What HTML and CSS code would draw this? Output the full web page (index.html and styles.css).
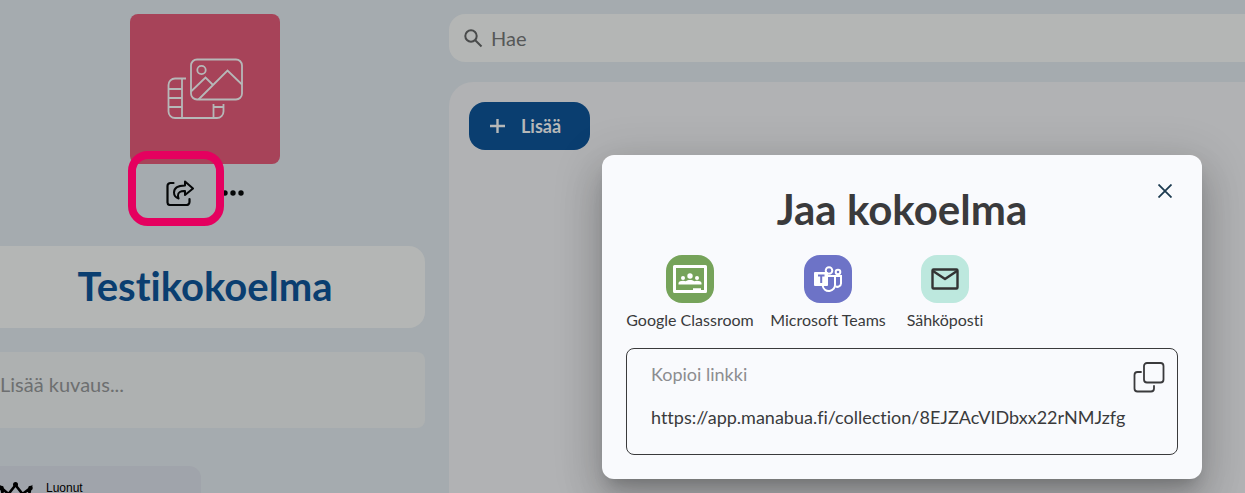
FILE: index.html
```html
<!DOCTYPE html>
<html lang="fi">
<head>
    <meta charset="UTF-8">
    <meta name="viewport" content="width=device-width, initial-scale=1.0">
    <title>Testikokoelma</title>
    <link rel="stylesheet" href="styles.css">
</head>
<body>
    <div class="page">
        <aside class="sidebar">
            <div class="cover">
                <svg width="76" height="62" viewBox="0 0 76 62" fill="none" stroke="currentColor" stroke-width="1.800">
                    <rect x="24" y="1.500" width="51" height="40" rx="6"/>
                    <circle cx="34.500" cy="12" r="4.200"/>
                    <path d="M24 33.500l14.500-14 7 7M31.500 41.500L60.500 12.500l14.500 14"/>
                    <path d="M19 20.500H8a6.500 6.500 0 0 0-6.500 6.500v26.500a6.500 6.500 0 0 0 6.500 6.500h42a6.500 6.500 0 0 0 6.500-6.500V46M15 20.500v39.500M1.500 31H15M1.500 40H15M1.500 49H15M46.500 46v14M46.500 49h10"/>
                </svg>
            </div>
            <div class="actions">
                <button type="button" class="icon-button share" aria-label="Jaa">
                    <svg width="28" height="26" viewBox="0 0 28 26" fill="none" stroke="currentColor" stroke-width="2.200" stroke-linecap="round" stroke-linejoin="round">
                        <path d="M7.500 3H4.500A3 3 0 0 0 1.500 6v16.500a2.500 2.500 0 0 0 2.500 2.500h16.500a3 3 0 0 0 3-3v-3"/>
                        <path d="M19 1.500l8 7-8 6.500v-4c-4.500-.3-7 1.500-7 4.500 0 1 .2 2 .6 3C9.500 17.500 8 15 8 12.500 8 8.500 11.500 5.500 19 5.500z" stroke-width="2"/>
                    </svg>
                </button>
                <button type="button" class="icon-button more" aria-label="Lisää toimintoja">
                    <svg width="22" height="6" viewBox="0 0 22 6" fill="currentColor">
                        <circle cx="3" cy="3" r="2.700"/><circle cx="11" cy="3" r="2.700"/><circle cx="19" cy="3" r="2.700"/>
                    </svg>
                </button>
            </div>
            <h1 class="collection-title">Testikokoelma</h1>
            <textarea class="description" placeholder="Lisää kuvaus..." aria-label="Kuvaus"></textarea>
            <div class="creator">
                <svg width="34" height="30" viewBox="0 0 34 30" fill="currentColor">
                    <circle cx="1.500" cy="7" r="2.300"/><circle cx="15.500" cy="3.500" r="2.500"/><circle cx="30.500" cy="7" r="2.300"/>
                    <path d="M1.500 7l7 6 7-9 7 9 8-6-4 18H5z" fill="none" stroke="currentColor" stroke-width="2.600"/>
                </svg>
                <span>Luonut</span>
            </div>
        </aside>

        <main class="content">
            <label class="search">
                <svg width="19" height="19" viewBox="0 0 19 19" fill="none" stroke="currentColor" stroke-width="2">
                    <circle cx="7" cy="7" r="5.700"/><path d="M11 11l6.500 6.500"/>
                </svg>
                <input type="search" placeholder="Hae" aria-label="Hae">
            </label>
            <section class="panel">
                <button type="button" class="add-button">
                    <svg width="15" height="15" viewBox="0 0 15 15" fill="none" stroke="currentColor" stroke-width="2.400">
                        <path d="M7.500 0v14M0 7h15"/>
                    </svg>
                    Lisää
                </button>
            </section>
        </main>
    </div>

    <div class="dialog" role="dialog" aria-labelledby="share-title">
        <button type="button" class="icon-button close" aria-label="Sulje">
            <svg width="14" height="14" viewBox="0 0 14 14" fill="none" stroke="currentColor" stroke-width="1.800">
                <path d="M.5.5l13 13M13.500.5l-13 13"/>
            </svg>
        </button>
        <h2 id="share-title">Jaa kokoelma</h2>
        <div class="targets">
            <button type="button" class="target">
                <span class="badge classroom">
                    <svg width="34" height="28" viewBox="0 0 34 28" fill="currentColor">
                        <path fill-rule="evenodd" d="M1.500 0h31A1.500 1.500 0 0 1 34 1.500v25a1.500 1.500 0 0 1-1.500 1.500h-31A1.500 1.500 0 0 1 0 26.500v-25A1.500 1.500 0 0 1 1.500 0zM3 3v22H20v-1.700h8v1.700h3v-22z"/>
                        <circle cx="17" cy="11" r="2.700"/><circle cx="10" cy="13" r="2"/><circle cx="24" cy="13" r="2"/>
                        <path d="M5.500 19.500v-1.500c0-1.500 2.500-2.300 4.500-2.300 1 0 2 .2 2.700.5 1.200-.8 2.800-1.200 4.300-1.200s3.100.4 4.300 1.200c.7-.3 1.700-.5 2.700-.5 2 0 4.500.8 4.500 2.300v1.500z"/>
                    </svg>
                </span>
                Google Classroom
            </button>
            <button type="button" class="target">
                <span class="badge teams">
                    <svg width="28" height="26" viewBox="0 0 28 26" fill="none" stroke="currentColor" stroke-width="2">
                        <circle cx="15" cy="4.500" r="3.300"/><circle cx="24" cy="6" r="2.300"/>
                        <path d="M14 10h7v8a6.200 6.200 0 0 1-12.400 1.500"/>
                        <path d="M21 10h6v7.500a3.500 3.500 0 0 1-5.500 2.700"/>
                        <rect x="0" y="6" width="14" height="14" rx="1" fill="currentColor" stroke="none"/>
                        <path class="teams-letter" d="M4 9.500h6.500M7.200 9.500V17"/>
                    </svg>
                </span>
                Microsoft Teams
            </button>
            <button type="button" class="target">
                <span class="badge email">
                    <svg width="28" height="22" viewBox="0 0 28 22" fill="none" stroke="currentColor" stroke-width="2.400" stroke-linejoin="round">
                        <rect x="1.500" y="1.500" width="25" height="19" rx="1"/>
                        <path d="M2 3l12 8 12-8"/>
                    </svg>
                </span>
                Sähköposti
            </button>
        </div>
        <div class="link-box">
            <div class="link-field">
                <label for="share-link">Kopioi linkki</label>
                <input id="share-link" type="text" readonly value="https://app.manabua.fi/collection/8EJZAcVIDbxx22rNMJzfg">
            </div>
            <button type="button" class="icon-button copy" aria-label="Kopioi">
                <svg width="32" height="32" viewBox="0 0 32 32" fill="none" stroke="currentColor" stroke-width="1.800" stroke-linecap="round">
                    <rect x="11" y="2" width="19.500" height="19.500" rx="3"/>
                    <path d="M8 11H4.500a3 3 0 0 0-3 3v13.500a3 3 0 0 0 3 3h13.500a3 3 0 0 0 3-3V25"/>
                </svg>
            </button>
        </div>
    </div>
</body>
</html>
```
FILE: styles.css
```css
* {
    box-sizing: border-box;
}
body {
    margin: 0;
    height: 100vh;
    overflow: hidden;
    background-color: #a5abaf;
    color: #3a3a3c;
    font-family: "Lato", "Liberation Sans", sans-serif;
    font-variant-ligatures: none;
}
button, input, textarea {
    font: inherit;
    font-variant-ligatures: none;
    color: inherit;
    border: 0;
    padding: 0;
    margin: 0;
    background: none;
    outline: none;
}
svg {
    display: block;
    flex-shrink: 0;
}
.page {
    display: flex;
    gap: 24px;
    height: 100%;
    padding-top: 14px;
}

/* left column */
.sidebar {
    width: 425px;
    flex-shrink: 0;
    display: flex;
    flex-direction: column;
}
.cover {
    width: 150px;
    height: 150px;
    flex-shrink: 0;
    margin-left: 130px;
    border-radius: 8px;
    background-color: #a74359;
    color: #b6b8b8;
    display: flex;
    align-items: center;
    justify-content: center;
}
.actions {
    display: flex;
    align-items: center;
    justify-content: center;
    gap: 28px;
    height: 58px;
    flex-shrink: 0;
    padding-right: 15px;
    color: #050708;
}
.share {
    position: relative;
}
/* highlight ring round the share button */
.share::after {
    content: "";
    position: absolute;
    inset: -29px -30px -20px -38px;
    border: 8px solid #e5005f;
    border-radius: 20px;
}
.collection-title {
    margin: 24px 0;
    height: 82px;
    flex-shrink: 0;
    padding-right: 15px;
    border-radius: 0 16px 16px 0;
    background-color: #b4b6b5;
    color: #0a3e70;
    font-size: 40px;
    line-height: 80px;
    text-align: center;
}
.description {
    display: block;
    height: 76px;
    flex-shrink: 0;
    padding: 20px 0;
    border-radius: 0 8px 8px 0;
    background-color: #aeb1b1;
    font-size: 20px;
    line-height: 24px;
    resize: none;
}
.description::placeholder {
    color: #6d6f70;
}
.creator {
    display: flex;
    gap: 12px;
    width: 201px;
    margin-top: 38px;
    padding-top: 15px;
    height: 80px;
    flex-shrink: 0;
    border-radius: 0 12px 0 0;
    background-color: #a0a4ab;
    color: #000;
    font-family: "Liberation Sans", sans-serif;
    font-size: 12px;
    line-height: 14px;
}

/* right column */
.content {
    flex: 1;
    display: flex;
    flex-direction: column;
    gap: 20px;
}
.search {
    display: flex;
    align-items: center;
    gap: 8px;
    height: 48px;
    padding-left: 15px;
    border-radius: 16px 0 0 16px;
    background-color: #b4b6b5;
    color: #494b4b;
    font-size: 20px;
}
.search input {
    flex: 1;
}
.search input::placeholder {
    color: #565858;
}
.panel {
    flex: 1;
    padding: 20px;
    border-radius: 24px 0 0 0;
    background-color: #b1b2b4;
}
.add-button {
    display: flex;
    align-items: center;
    gap: 16px;
    height: 48px;
    min-width: 121px;
    padding: 0 21px;
    border-radius: 16px;
    background-color: #0a3e70;
    color: #b6b8b8;
    font-size: 18px;
    font-weight: bold;
}

/* share dialog */
.dialog {
    position: absolute;
    top: 155px;
    right: 43px;
    width: 600px;
    padding: 24px;
    border-radius: 12px;
    background-color: #f9fafd;
    box-shadow: 0 11px 15px -7px rgba(0, 0, 0, 0.2), 0 24px 38px 3px rgba(0, 0, 0, 0.14), 0 9px 46px 8px rgba(0, 0, 0, 0.12);
}
.dialog h2 {
    margin: 6px 0 22px;
    font-size: 42px;
    line-height: 48px;
    text-align: center;
}
.close {
    position: absolute;
    top: 29px;
    right: 30px;
    color: #1c3a50;
}
.targets {
    display: grid;
    grid-template-columns: 128px 116px 86px;
    gap: 16px;
}
.target {
    display: flex;
    flex-direction: column;
    align-items: center;
    gap: 8px;
    font-size: 16px;
    line-height: 18px;
    white-space: nowrap;
}
.badge {
    display: flex;
    align-items: center;
    justify-content: center;
    width: 48px;
    height: 48px;
    border-radius: 16px;
    color: #fff;
}
.classroom {
    background-color: #76a35a;
}
.teams {
    background-color: #6d73c7;
}
.teams-letter {
    stroke: #6d73c7;
}
.email {
    background-color: #bde8de;
    color: #333;
}
.link-box {
    display: flex;
    align-items: flex-start;
    height: 107px;
    margin-top: 19px;
    padding: 12px;
    border: 1px solid #3a3a3c;
    border-radius: 8px;
}
.link-field {
    flex: 1;
    display: flex;
    flex-direction: column;
    gap: 19px;
    padding: 1px 0 0 12px;
    font-size: 18px;
    line-height: 24px;
}
.link-field label {
    color: #8c8d90;
}
.link-field input {
    width: 100%;
    height: 24px;
}
```
